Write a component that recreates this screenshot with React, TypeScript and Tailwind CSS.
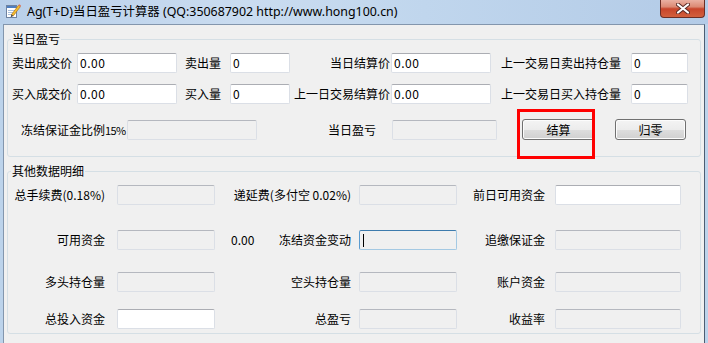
import React from 'react';

const ui = "font-['Noto_Sans_CJK_SC','Noto_Sans',sans-serif] text-[12px] leading-[16px] text-black";

type BoxProps = {
  className: string;
  value?: string;
  kind?: 'white' | 'ro' | 'focus';
};

// Win7 style textbox
function Box({ className, value = '', kind = 'ro' }: BoxProps) {
  const skin =
    kind === 'white'
      ? 'bg-white border-[#dbdfe6] border-t-[#abadb3]'
      : kind === 'focus'
      ? 'bg-[#f0f0f0] border-[#a4c9e3] border-t-[#3d7bad] border-l-[#5a9bd0]'
      : 'bg-[#f0f0f0] border-[#dbdfe6] border-t-[#b5b8bf]';
  return (
    <div className={`${className} h-[20px] shrink-0 flex items-center border rounded-[2px] pl-[2px] ${skin}`}>
      {kind === 'focus' && <span className="w-[1px] h-[13px] bg-black ml-[1px]" />}
      {value && <span className="leading-[18px] tracking-[0.5px]">{value}</span>}
    </div>
  );
}

function Btn({ className, label }: { className: string; label: string }) {
  return (
    <div
      className={`${className} h-[21px] shrink-0 flex items-center justify-center rounded-[3px] border border-[#707070] bg-[linear-gradient(180deg,#f4f4f4_0%,#ececec_50%,#dedede_51%,#d0d0d0_100%)] shadow-[inset_0_0_0_1px_#fcfcfc]`}
    >
      {label}
    </div>
  );
}

function TitleIcon() {
  return (
    <svg width="16" height="16" viewBox="0 0 16 16">
      <rect x="1.5" y="2.5" width="10" height="12" fill="#fff" stroke="#6f83a0" />
      <rect x="2" y="3" width="9" height="2" fill="#4f7fc0" />
      <line x1="3" y1="7.5" x2="10" y2="7.5" stroke="#a9c0dd" />
      <line x1="3" y1="9.5" x2="9" y2="9.5" stroke="#a9c0dd" />
      <line x1="3" y1="11.5" x2="8" y2="11.5" stroke="#a9c0dd" />
      <path d="M6.5 11.5 L13.6 2.2 L15.4 3.6 L8.3 12.9 Z" fill="#f6c02f" stroke="#b0701a" strokeWidth="0.7" />
      <path d="M6.5 11.5 L8.3 12.9 L5.6 14.2 Z" fill="#3a3a3a" />
      <path d="M13.6 2.2 L14.4 1.2 L16 2.5 L15.4 3.6 Z" fill="#e46a5a" />
    </svg>
  );
}

export default function App() {
  return (
    <div className={`relative w-[708px] h-[343px] overflow-hidden flex flex-col bg-[#bcd3eb] ${ui}`}>
      {/* Title bar */}
      <div className="h-[24px] shrink-0 flex items-start bg-[linear-gradient(90deg,#b9d0ea_0%,#cadcf0_35%,#c0d6ed_60%,#b3cbe7_100%)]">
        <div className="ml-[5px] mt-[3px]">
          <TitleIcon />
        </div>
        <span className="ml-[6px] leading-[24px] font-['Noto_Sans','Noto_Sans_CJK_SC',sans-serif] text-[12.4px] text-black whitespace-nowrap">
          Ag(T+D)当日盈亏计算器 (QQ:350687902 http://www.hong100.cn)
        </span>
        <div className="ml-auto mr-[3px] w-[45px] h-[18px] flex items-center justify-center rounded-b-[4px] border border-t-0 border-[#6b2e25] bg-[linear-gradient(180deg,#eab0a2_0%,#dc8a74_40%,#c8452b_52%,#d2603d_100%)]">
          <svg width="14" height="11" viewBox="0 0 14 11">
            <path d="M2 1.5 L12 9.5 M12 1.5 L2 9.5" stroke="#5a2a25" strokeWidth="4" strokeLinecap="round" />
            <path d="M2 1.5 L12 9.5 M12 1.5 L2 9.5" stroke="#ffffff" strokeWidth="2.2" strokeLinecap="round" />
          </svg>
        </div>
      </div>

      {/* Client area */}
      <div className="flex-1 mx-[3px] border border-b-0 border-[#8396ad] border-r-[#4d5d72] bg-[#f0f0f0] px-[3px]">
        {/* 当日盈亏 */}
        <fieldset className="mt-[6px] w-[694px] border border-[#d5dfe5] rounded-[3px] pb-[15px]">
          <legend className="ml-[3px] px-[1px] leading-[16px]">当日盈亏</legend>

          <div className="flex items-center h-[20px] mt-[6px] pl-[4px] whitespace-nowrap">
            <span className="w-[65px] shrink-0">卖出成交价</span>
            <Box className="w-[100px]" kind="white" value="0.00" />
            <span className="w-[53px] shrink-0 pl-[8px]">卖出量</span>
            <Box className="w-[60px]" kind="white" value="0" />
            <span className="w-[101px] shrink-0 text-right pr-[1px]">当日结算价</span>
            <Box className="w-[100px]" kind="white" value="0.00" />
            <span className="w-[140px] shrink-0 pl-[10px]">上一交易日卖出持仓量</span>
            <Box className="w-[57px]" kind="white" value="0" />
          </div>

          <div className="flex items-center h-[20px] mt-[11px] pl-[4px] whitespace-nowrap">
            <span className="w-[65px] shrink-0">买入成交价</span>
            <Box className="w-[100px]" kind="white" value="0.00" />
            <span className="w-[53px] shrink-0 pl-[8px]">买入量</span>
            <Box className="w-[60px]" kind="white" value="0" />
            <span className="w-[101px] shrink-0 text-right pr-[1px]">上一日交易结算价</span>
            <Box className="w-[100px]" kind="white" value="0.00" />
            <span className="w-[140px] shrink-0 pl-[10px]">上一交易日买入持仓量</span>
            <Box className="w-[57px]" kind="white" value="0" />
          </div>

          <div className="flex items-center h-[23px] mt-[14px] pl-[13px] whitespace-nowrap">
            <span className="w-[106px] shrink-0">
              冻结保证金比例<span className="text-[11px] tracking-[-0.6px]">15%</span>
            </span>
            <Box className="w-[130px]" />
            <span className="w-[135px] shrink-0 text-right pr-[16px]">当日盈亏</span>
            <Box className="w-[105px]" />
            <Btn className="ml-[25px] w-[73px]" label="结算" />
            <Btn className="ml-[20px] w-[71px]" label="归零" />
          </div>
        </fieldset>

        {/* 其他数据明细 */}
        <fieldset className="mt-[6px] w-[694px] border border-[#d5dfe5] rounded-[3px] pb-[4px]">
          <legend className="ml-[3px] px-[1px] leading-[16px]">其他数据明细</legend>

          <div className="flex items-center h-[20px] mt-[6px] whitespace-nowrap">
            <span className="w-[109px] shrink-0 text-right pr-[12px]">总手续费(0.18%)</span>
            <Box className="w-[98px]" />
            <span className="w-[144px] shrink-0 text-right pr-[8px]">递延费(多付空 0.02%)</span>
            <Box className="w-[98px]" />
            <span className="w-[98px] shrink-0 text-right pr-[10px]">前日可用资金</span>
            <Box className="w-[126px]" kind="white" />
          </div>

          <div className="flex items-center h-[20px] mt-[25px] whitespace-nowrap">
            <span className="w-[109px] shrink-0 text-right pr-[12px]">可用资金</span>
            <Box className="w-[98px]" />
            <span className="w-[144px] shrink-0 flex justify-between pl-[16px] pr-[8px]">
              <span>0.00</span>
              <span>冻结资金变动</span>
            </span>
            <Box className="w-[98px]" kind="focus" />
            <span className="w-[98px] shrink-0 text-right pr-[10px]">追缴保证金</span>
            <Box className="w-[126px]" />
          </div>

          <div className="flex items-center h-[20px] mt-[22px] whitespace-nowrap">
            <span className="w-[109px] shrink-0 text-right pr-[12px]">多头持仓量</span>
            <Box className="w-[98px]" />
            <span className="w-[144px] shrink-0 text-right pr-[8px]">空头持仓量</span>
            <Box className="w-[98px]" />
            <span className="w-[98px] shrink-0 text-right pr-[10px]">账户资金</span>
            <Box className="w-[126px]" />
          </div>

          <div className="flex items-center h-[20px] mt-[17px] whitespace-nowrap">
            <span className="w-[109px] shrink-0 text-right pr-[12px]">总投入资金</span>
            <Box className="w-[98px]" kind="white" />
            <span className="w-[144px] shrink-0 text-right pr-[8px]">总盈亏</span>
            <Box className="w-[98px]" />
            <span className="w-[98px] shrink-0 text-right pr-[10px]">收益率</span>
            <Box className="w-[126px]" />
          </div>
        </fieldset>
      </div>

      {/* red annotation frame */}
      <div className="absolute left-[517px] top-[109px] w-[78px] h-[50px] border-[3px] border-[#ff0000] pointer-events-none" />
    </div>
  );
}
